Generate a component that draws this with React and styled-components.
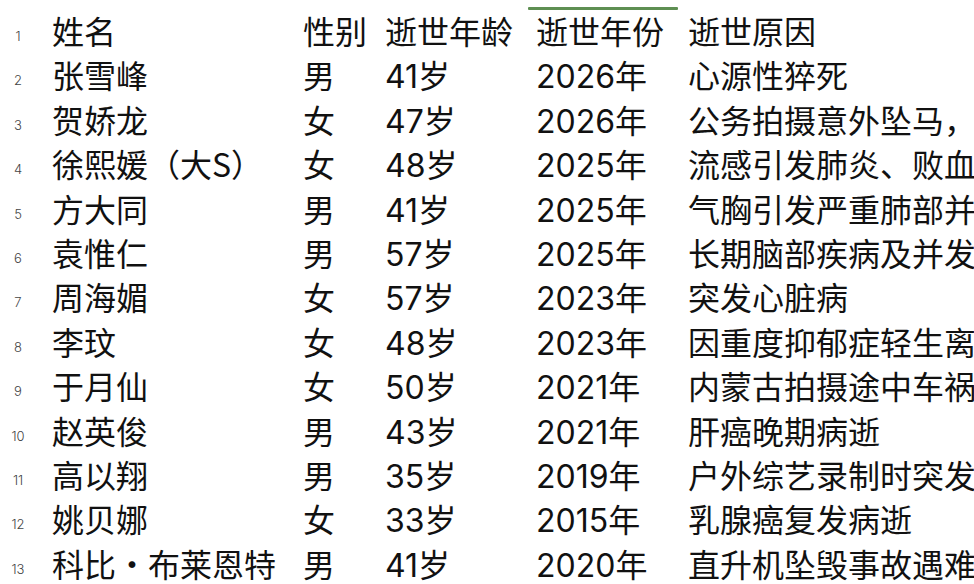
import React from "react";
import styled, { createGlobalStyle } from "styled-components";

const GlobalStyle = createGlobalStyle`
  html, body {
    margin: 0;
    padding: 0;
    background: #fff;
  }
  body {
    font-family: "Noto Sans CJK SC", "Noto Sans", sans-serif;
    color: #111;
    overflow: hidden;
  }
`;

const Sheet = styled.div`
  width: 974px;
  height: 584px;
  padding-top: 8px;
  box-sizing: border-box;
  overflow: hidden;
`;

const Row = styled.div`
  display: grid;
  grid-template-columns: 52px 251px 82px 151px 152px 1fr;
  height: 44.4px;
  align-items: baseline;
`;

const RowNum = styled.div`
  width: 36px;
  text-align: center;
  font-family: "Inter", "Noto Sans", sans-serif;
  font-size: 13px;
  font-weight: 300;
  color: #444;
  position: relative;
  top: -3px;
`;

const Cell = styled.div`
  position: relative;
  font-family: ${(p) =>
    p.$digits
      ? `"Inter", "Noto Sans CJK SC", sans-serif`
      : `"Noto Sans CJK SC", "Noto Sans", sans-serif`};
  font-size: 32px;
  line-height: 44px;
  white-space: nowrap;
  overflow: ${(p) => (p.$marked ? "visible" : "hidden")};

  ${(p) =>
    p.$marked &&
    `
    &::before {
      content: "";
      position: absolute;
      left: -8px;
      width: 150px;
      top: -1px;
      height: 2.5px;
      background: #5e8f52;
      border-radius: 1px;
    }
  `}
`;

const header = ["姓名", "性别", "逝世年龄", "逝世年份", "逝世原因"];

const rows = [
  ["张雪峰", "男", "41岁", "2026年", "心源性猝死"],
  ["贺娇龙", "女", "47岁", "2026年", "公务拍摄意外坠马，"],
  ["徐熙媛（大S）", "女", "48岁", "2025年", "流感引发肺炎、败血症"],
  ["方大同", "男", "41岁", "2025年", "气胸引发严重肺部并发症"],
  ["袁惟仁", "男", "57岁", "2025年", "长期脑部疾病及并发症"],
  ["周海媚", "女", "57岁", "2023年", "突发心脏病"],
  ["李玟", "女", "48岁", "2023年", "因重度抑郁症轻生离世"],
  ["于月仙", "女", "50岁", "2021年", "内蒙古拍摄途中车祸"],
  ["赵英俊", "男", "43岁", "2021年", "肝癌晚期病逝"],
  ["高以翔", "男", "35岁", "2019年", "户外综艺录制时突发心脏骤停"],
  ["姚贝娜", "女", "33岁", "2015年", "乳腺癌复发病逝"],
  ["科比·布莱恩特", "男", "41岁", "2020年", "直升机坠毁事故遇难"],
];

export default function App() {
  return (
    <>
      <GlobalStyle />
      <Sheet>
        <Row>
          <RowNum>1</RowNum>
          {header.map((h, i) => (
            <Cell key={i} $marked={i === 3}>
              {h}
            </Cell>
          ))}
        </Row>
        {rows.map((r, idx) => (
          <Row key={idx}>
            <RowNum>{idx + 2}</RowNum>
            {r.map((c, i) => (
              <Cell key={i} $digits={i === 2 || i === 3}>
                {c}
              </Cell>
            ))}
          </Row>
        ))}
      </Sheet>
    </>
  );
}
